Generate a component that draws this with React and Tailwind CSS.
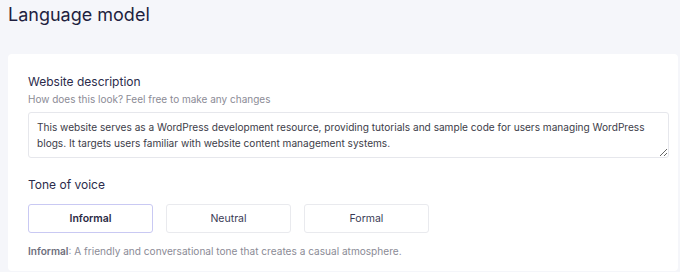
import React, { useState } from 'react';

const tonos = [
  { id: 'informal', label: 'Informal', desc: 'A friendly and conversational tone that creates a casual atmosphere.' },
  { id: 'neutral', label: 'Neutral', desc: 'A balanced tone that is neither too casual nor too formal.' },
  { id: 'formal', label: 'Formal', desc: 'A professional and polished tone suited to business content.' },
];

export default function App() {
  const [tono, setTono] = useState('informal');
  const actual = tonos.find((t) => t.id === tono);

  return (
    <div className="h-[272px] overflow-hidden bg-[#f5f6fa] pl-2 pr-[2px] font-['Inter',sans-serif]">
      {/* Title */}
      <h1 className="text-[18px] leading-[28px] text-[#1f1f3f] pt-[1px]">Language model</h1>

      {/* Card */}
      <div className="mt-[25px] bg-white rounded-sm px-5 pt-[19px] pb-3">
        <h2 className="text-[12px] leading-[18px] text-[#2b2b4b]">Website description</h2>
        <p className="text-[10px] leading-[14px] text-[#8b8b96] mt-[1px]">How does this look? Feel free to make any changes</p>

        <textarea
          readOnly
          defaultValue="This website serves as a WordPress development resource, providing tutorials and sample code for users managing WordPress blogs. It targets users familiar with website content management systems."
          className="block mt-[6px] w-[641px] h-[46px] border border-[#e6e7ec] rounded-[3px] px-2 py-[6px] text-[10.1px] leading-[16px] text-[#3c3c48] outline-none"
        />

        <h2 className="mt-[18px] text-[12px] leading-[18px] text-[#2b2b4b]">Tone of voice</h2>

        <div className="flex gap-[13px] mt-[10px]">
          {tonos.map((t) => (
            <button
              key={t.id}
              type="button"
              onClick={() => setTono(t.id)}
              className={`w-[125px] h-[29px] rounded-[3px] border text-[10.5px] ${
                tono === t.id
                  ? 'border-[#c9c9f3] font-semibold text-[#2a2a44]'
                  : 'border-[#e9eaee] text-[#3a3a55]'
              }`}
            >
              {t.label}
            </button>
          ))}
        </div>

        <p className="mt-[10px] text-[10.1px] leading-[16px] text-[#8b8b96]">
          <span className="font-semibold text-[#6e6e7c]">{actual.label}</span>: {actual.desc}
        </p>
      </div>
    </div>
  );
}
